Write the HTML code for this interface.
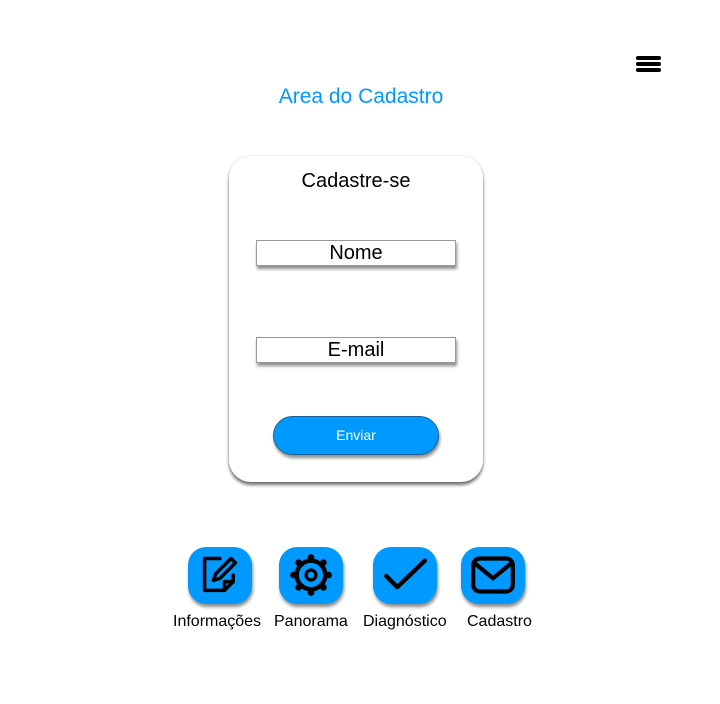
<!DOCTYPE html>
<html><head><style>
body{margin:0;width:720px;height:704px;background:#fff;font-family:"Liberation Sans",sans-serif;position:relative;overflow:hidden}
.a{position:absolute}
.ham div{position:absolute;left:0;width:25px;height:4px;border-radius:2px;background:#000}
.card{left:229px;top:156px;width:254px;height:326px;border-radius:22px;background:#fff;box-shadow:0 3px 3px rgba(0,0,0,.55),0 0 2px rgba(0,0,0,.15)}
.inp{left:256px;width:198px;height:24px;border:1px solid #999;background:#fff;box-shadow:1px 3px 3px rgba(0,0,0,.45);text-align:center;font-size:20px;line-height:24px;color:#000}
.btn{left:273px;top:416px;width:164px;height:37px;border:1px solid #1a5f95;border-radius:20px;background:#0099ff;box-shadow:1px 3px 3px rgba(0,0,0,.45);color:#fff;text-align:center;line-height:37px;font-size:14px}
.ic{top:547px;width:64px;height:57px;border-radius:18px;background:#0099ff;box-shadow:1px 3px 3px rgba(0,0,0,.45)}
.ic svg{position:absolute;left:10px;top:6px}
.lb{top:613px;font-size:16px;color:#000}
</style></head><body>
<div class="a ham" style="left:636px;top:56px;width:25px;height:18px"><div style="top:0"></div><div style="top:6px"></div><div style="top:12px"></div></div>
<div class="a" style="left:0;width:722px;top:85px;text-align:center;color:#0099ff;font-size:21px">Area do Cadastro</div>
<div class="a card"></div>
<div class="a" style="left:229px;width:254px;top:170px;text-align:center;font-size:20px">Cadastre-se</div>
<div class="a inp" style="top:240px">Nome</div>
<div class="a inp" style="top:337px">E-mail</div>
<div class="a btn">Enviar</div>

<div class="a ic" style="left:188px"><svg width="44" height="44" viewBox="0 0 40 40" fill="none" stroke="#000" stroke-width="3.2" stroke-linejoin="round" stroke-linecap="round"><path d="M20 5H6v29h18l8-8V20"/><path d="M24 34v-8h8"/><path d="M30 5l4 4-14 14-6 2 2-6z"/></svg></div>
<div class="a ic" style="left:279px"><svg width="44" height="44" viewBox="0 0 40 40" fill="none" stroke="#000" stroke-width="4"><circle cx="20" cy="20" r="13"/><circle cx="20" cy="20" r="4.5" stroke-width="3"/><g fill="#000" stroke="none"><circle cx="20" cy="4" r="3"/><circle cx="20" cy="36" r="3"/><circle cx="4" cy="20" r="3"/><circle cx="36" cy="20" r="3"/><circle cx="8.7" cy="8.7" r="3"/><circle cx="31.3" cy="8.7" r="3"/><circle cx="8.7" cy="31.3" r="3"/><circle cx="31.3" cy="31.3" r="3"/></g></svg></div>
<div class="a ic" style="left:373px"><svg width="44" height="44" viewBox="0 0 40 40" fill="none" stroke="#000" stroke-width="4" stroke-linecap="round" stroke-linejoin="round"><path d="M3 21l10 10L38 7"/></svg></div>
<div class="a ic" style="left:461px"><svg width="44" height="44" viewBox="0 0 40 40" fill="none" stroke="#000" stroke-width="3.8" stroke-linejoin="round"><rect x="2" y="5" width="36" height="30" rx="6"/><path d="M3 9l17 14 17-14"/></svg></div>

<div class="a lb" style="left:173px">Informações</div>
<div class="a lb" style="left:274px">Panorama</div>
<div class="a lb" style="left:363px">Diagnóstico</div>
<div class="a lb" style="left:467px">Cadastro</div>
</body></html>
